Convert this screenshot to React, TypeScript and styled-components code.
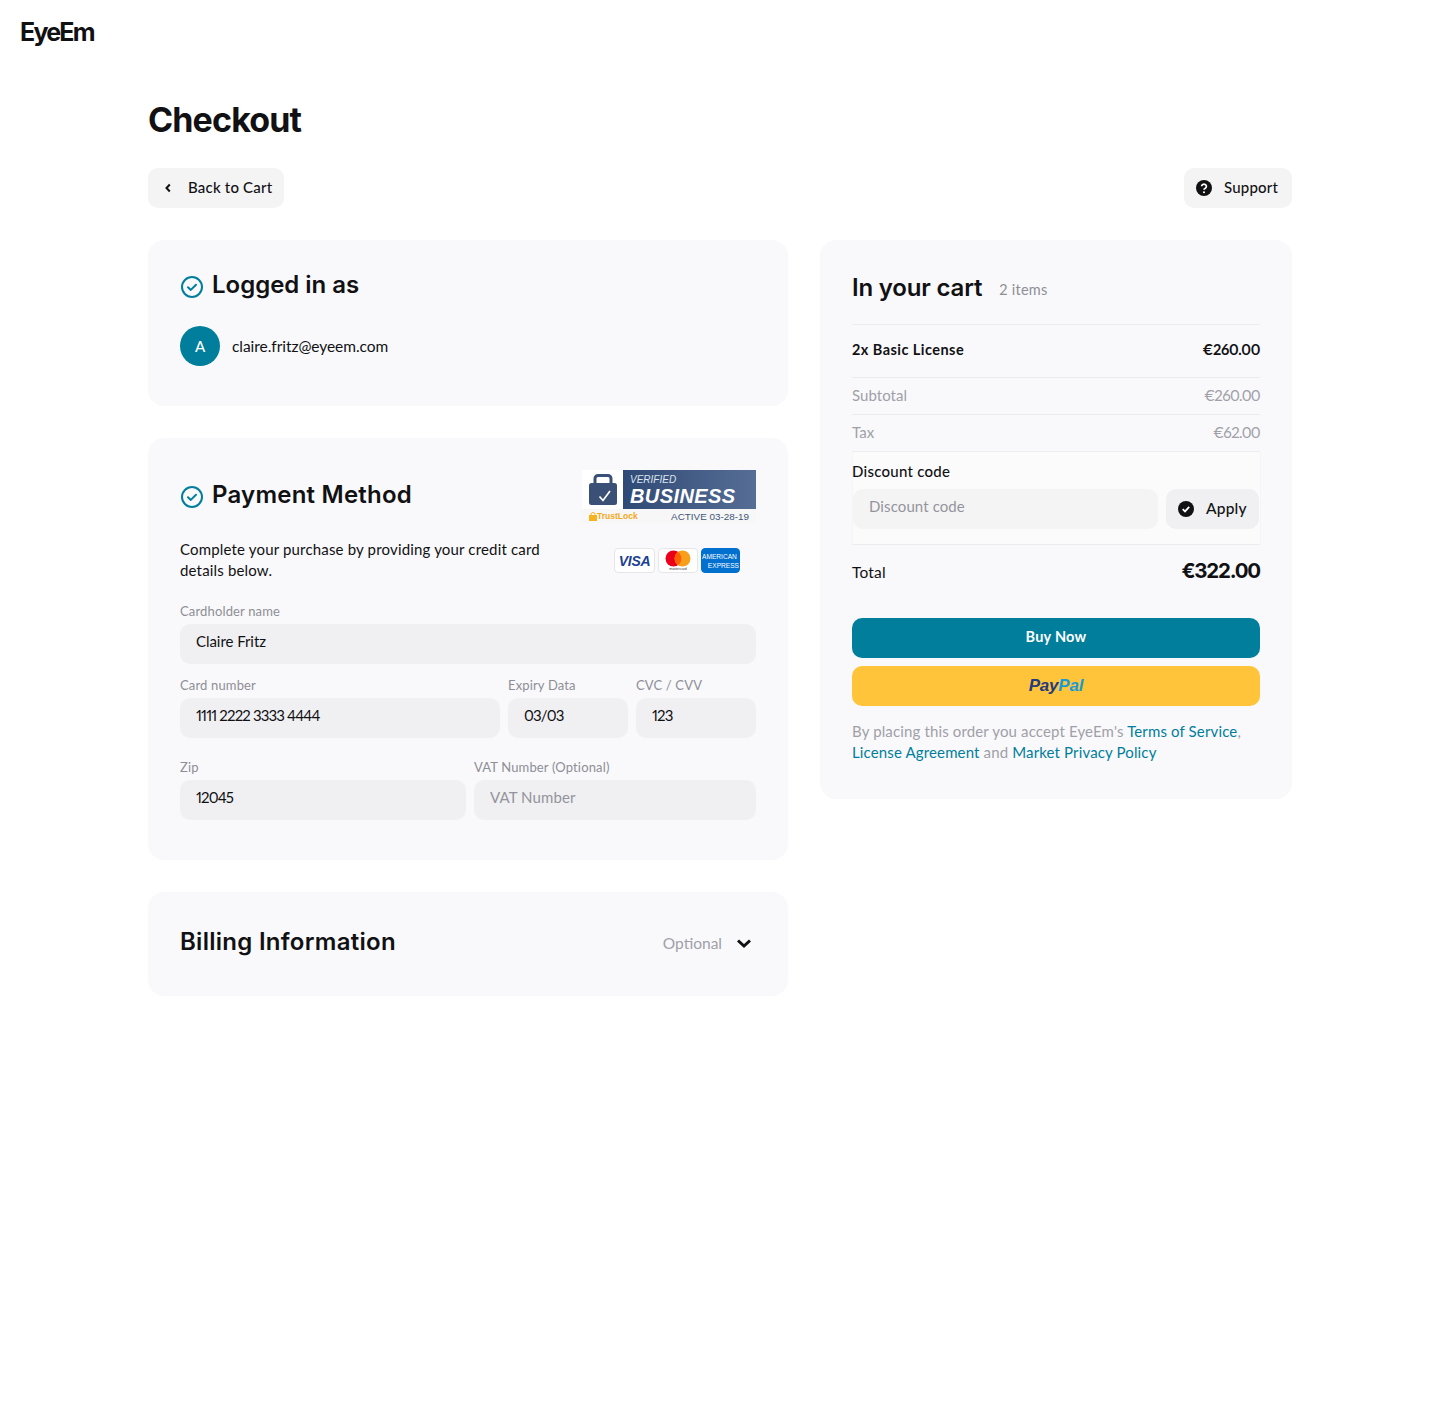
import React from "react";
import styled, { createGlobalStyle } from "styled-components";

const Global = createGlobalStyle`
  html, body { margin: 0; padding: 0; background: #fff; }
  body {
    font-family: Lato, "Open Sans", sans-serif;
    color: #111114;
    font-variant-numeric: proportional-nums;
  }
  * { box-sizing: border-box; }
`;

const Page = styled.div`
  width: 1440px;
  height: 1404px;
  padding-top: 18px;
`;
const Logo = styled.div`
  margin-left: 20px;
  height: 28px;
  font: 700 25px/28px Inter, sans-serif;
  letter-spacing: -1.8px;
  color: #111114;
`;
const Main = styled.main`
  width: 1144px;
  margin: 0 auto;
  padding-top: 52px;
`;
const Title = styled.h1`
  margin: 0;
  height: 44px;
  font: 700 34px/44px Inter, sans-serif;
  letter-spacing: -0.85px;
`;
const TopBar = styled.div`
  display: flex;
  justify-content: space-between;
  margin-top: 26px;
`;
const GhostButton = styled.button<{ $w: number }>`
  display: flex;
  align-items: center;
  gap: 12px;
  width: ${(p) => p.$w}px;
  height: 40px;
  padding: 0 0 0 12px;
  border: 0;
  border-radius: 10px;
  background: #f4f4f5;
  color: #111114;
  font: 500 15px/20px Lato, sans-serif;
  letter-spacing: 0.2px;
`;
const ButtonLabel = styled.span`
  margin-top: -2px;
`;
const Columns = styled.div`
  display: grid;
  grid-template-columns: 640px 472px;
  gap: 32px;
  align-items: start;
  margin-top: 32px;
`;
const Stack = styled.div`
  display: flex;
  flex-direction: column;
  gap: 32px;
`;
const Card = styled.section<{ $h: number }>`
  height: ${(p) => p.$h}px;
  padding: 32px;
  border-radius: 16px;
  background: #f9f9fb;
`;
const Heading = styled.h2<{ $ls: number }>`
  margin: 0;
  font: 600 24px/28px Inter, sans-serif;
  letter-spacing: ${(p) => p.$ls}px;
`;
const StatusIcon = styled.svg`
  flex: none;
  width: 24px;
  height: 24px;
  margin-top: 2px;
`;
const HeadingRow = styled.div<{ $h: number }>`
  display: flex;
  align-items: center;
  gap: 8px;
  height: ${(p) => p.$h}px;
  ${Heading} {
    margin-bottom: 2px;
  }
`;
const UserRow = styled.div`
  display: flex;
  align-items: center;
  gap: 12px;
  margin-top: 26px;
`;
const Avatar = styled.div`
  display: flex;
  align-items: center;
  justify-content: center;
  width: 40px;
  height: 40px;
  border-radius: 50%;
  background: #007e9b;
  color: #fff;
  font: 500 15px Lato, sans-serif;
`;
const Email = styled.span`
  font-size: 15.5px;
  letter-spacing: -0.05px;
`;
const PaymentHead = styled.div`
  display: flex;
  justify-content: space-between;
  height: 53px;
  align-items: flex-start;
`;
const TrustBadge = styled.div`
  display: grid;
  grid-template-columns: 41px 133px;
  grid-template-rows: 39px 14px;
  width: 174px;
  background: #fff;
`;
const LockCell = styled.div`
  display: flex;
  align-items: flex-start;
  justify-content: flex-start;
  padding: 4px 0 0 7px;
`;
const VerifiedPanel = styled.div`
  display: flex;
  flex-direction: column;
  padding: 5px 0 0 7px;
  background: linear-gradient(90deg, #2f4a76, #566e95);
  color: #fff;
  font-family: "Liberation Sans", sans-serif;
  font-style: italic;
`;
const Verified = styled.span`
  height: 10px;
  font-size: 10px;
  line-height: 10px;
  color: #dfe5ee;
`;
const Business = styled.span`
  font-size: 20px;
  line-height: 23px;
  font-weight: 700;
  letter-spacing: 0.4px;
`;
const BadgeStrip = styled.div`
  grid-column: 1 / 3;
  display: flex;
  align-items: center;
  justify-content: space-between;
  padding: 0 7px;
  background: #f7f7f7;
  font: 9.9px/13px "Liberation Sans", sans-serif;
`;
const TrustLock = styled.span`
  display: flex;
  align-items: center;
  color: #f5a81c;
  font-weight: 700;
  font-size: 8.5px;
`;
const Active = styled.span`
  color: #3f5679;
`;
const DescRow = styled.div`
  display: flex;
  justify-content: space-between;
  margin-top: 16px;
  height: 42px;
`;
const Desc = styled.p`
  margin: 0;
  width: 380px;
  font-size: 15px;
  line-height: 21px;
  letter-spacing: 0.17px;
`;
const CardLogos = styled.div`
  display: flex;
  gap: 3px;
  margin: 9px 16px 0 0;
`;
const CardLogo = styled.div<{ $blue?: boolean; $w: number }>`
  display: flex;
  align-items: center;
  justify-content: center;
  width: ${(p) => p.$w}px;
  height: 25px;
  overflow: hidden;
  border: 1px solid ${(p) => (p.$blue ? "#0170ce" : "#e6e6e8")};
  border-radius: 4px;
  background: ${(p) => (p.$blue ? "#0170ce" : "#fff")};
`;
const VisaText = styled.span`
  color: #1a3f92;
  font: italic 700 14px "Liberation Sans", sans-serif;
  letter-spacing: -0.3px;
`;
const AmexText = styled.span`
  display: flex;
  flex-direction: column;
  width: 100%;
  color: #fff;
  font: 400 6.6px/9px "Liberation Sans", sans-serif;
  white-space: nowrap;
`;
const AmexLine = styled.span<{ $right?: boolean }>`
  text-align: ${(p) => (p.$right ? "right" : "left")};
`;
const MasterWrap = styled.div`
  display: flex;
  flex-direction: column;
  align-items: center;
`;
const MasterCaption = styled.span`
  color: #333;
  font: 3.5px/4px "Liberation Sans", sans-serif;
`;
const Form = styled.div`
  display: flex;
  flex-direction: column;
  margin-top: 22px;
`;
const FieldRow = styled.div<{ $cols: string; $mt: number }>`
  display: grid;
  grid-template-columns: ${(p) => p.$cols};
  gap: 8px;
  margin-top: ${(p) => p.$mt}px;
`;
const Field = styled.label`
  display: flex;
  flex-direction: column;
  gap: 5px;
`;
const FieldLabel = styled.span`
  height: 16px;
  color: #8e8e96;
  font-size: 13px;
  line-height: 16px;
  letter-spacing: 0.15px;
`;
const Input = styled.input<{ $bg?: string; $tight?: boolean }>`
  width: 100%;
  height: 40px;
  padding: 0 16px 7px;
  border: 0;
  outline: 0;
  border-radius: 10px;
  background: ${(p) => p.$bg ?? "#f0f0f2"};
  color: #111114;
  font: 15px Lato, sans-serif;
  font-variant-numeric: proportional-nums;
  letter-spacing: ${(p) => (p.$tight ? -0.85 : -0.05)}px;
  &::placeholder {
    color: #94949c;
    opacity: 1;
    letter-spacing: 0.1px;
  }
`;
const BillingRow = styled.div`
  display: flex;
  align-items: center;
  justify-content: space-between;
  height: 36px;
`;
const OptionalWrap = styled.div`
  display: flex;
  align-items: center;
  gap: 14px;
  margin: 2px 4px 0 0;
  color: #a0a0a8;
  font-size: 15.5px;
  letter-spacing: 0;
`;
const CartHead = styled.div`
  display: flex;
  align-items: center;
  gap: 17px;
  height: 53px;
  padding-bottom: 20px;
  border-bottom: 1px solid #ececef;
`;
const CartCount = styled.span`
  color: #8e8e96;
  font-size: 14.5px;
  letter-spacing: 0.25px;
  margin-top: 2px;
`;
const LineRow = styled.div<{ $h: number; $muted?: boolean; $strong?: boolean }>`
  display: flex;
  align-items: center;
  justify-content: space-between;
  height: ${(p) => p.$h}px;
  padding-bottom: 3px;
  border-bottom: 1px solid #ececef;
  color: ${(p) => (p.$muted ? "#a0a0a8" : "#111114")};
  font-size: ${(p) => (p.$muted ? 15 : 14.5)}px;
  font-weight: ${(p) => (p.$strong ? 700 : 400)};
  letter-spacing: ${(p) => (p.$strong ? 0.45 : 0.05)}px;
`;
const Price = styled.span<{ $ls: number }>`
  letter-spacing: ${(p) => p.$ls}px;
`;
const DiscountSection = styled.div`
  margin-right: -1px;
  border-left: 1px solid #f5f5f7;
  border-right: 1px solid #f5f5f7;
  background: #fbfbfc;
`;
const DiscountLabel = styled.div`
  padding-top: 10px;
  margin-left: -1px;
  height: 28px;
  font-size: 15px;
  font-weight: 500;
  line-height: 18px;
  letter-spacing: 0.25px;
`;
const DiscountRow = styled.div`
  display: grid;
  grid-template-columns: 305px 93px;
  gap: 8px;
  margin-top: 9px;
  padding-bottom: 15px;
`;
const ApplyButton = styled.button`
  display: flex;
  align-items: center;
  gap: 12px;
  height: 40px;
  padding: 0 0 0 12px;
  border: 0;
  border-radius: 10px;
  background: #f0f0f2;
  color: #111114;
  font: 500 15.5px Lato, sans-serif;
  letter-spacing: 0.2px;
`;
const TotalRow = styled.div`
  display: flex;
  align-items: center;
  justify-content: space-between;
  height: 55px;
  border-top: 1px solid #ececef;
  font-size: 15.5px;
  letter-spacing: 0.2px;
`;
const TotalPrice = styled.span`
  font: 700 20.5px Inter, sans-serif;
  letter-spacing: -1.2px;
  margin-top: -3px;
`;
const PrimaryButton = styled.button<{ $yellow?: boolean }>`
  display: flex;
  align-items: center;
  justify-content: center;
  width: 100%;
  height: 40px;
  margin-top: ${(p) => (p.$yellow ? 8 : 19)}px;
  padding: 0 0 ${(p) => (p.$yellow ? 0 : 4)}px;
  border: 0;
  border-radius: 10px;
  background: ${(p) => (p.$yellow ? "#ffc439" : "#007e9b")};
  color: #fff;
  font: 700 14.5px Lato, sans-serif;
  letter-spacing: 0.25px;
`;
const PayText = styled.span`
  color: #253b80;
  font: italic 700 17px "Liberation Sans", sans-serif;
  letter-spacing: -0.2px;
`;
const PalText = styled.span`
  color: #179bd7;
`;
const Terms = styled.p`
  margin: 15px 0 0;
  color: #a0a0a8;
  font-size: 15px;
  line-height: 21px;
  letter-spacing: 0.14px;
`;
const TermsLink = styled.a`
  color: #007e9b;
`;

const CheckCircle = () => (
  <StatusIcon viewBox="0 0 24 24" fill="none">
    <circle cx="12" cy="12" r="10" stroke="#007e9b" strokeWidth="2" />
    <path d="M8 12.3l2.8 2.6L16 9.8" stroke="#007e9b" strokeWidth="2" strokeLinecap="round" strokeLinejoin="round" />
  </StatusIcon>
);

const LockIcon = () => (
  <svg width="28" height="31" viewBox="0 0 28 31" fill="none">
    <path d="M6 10V4.500A3 3 0 0 1 9 1.500h10a3 3 0 0 1 3 3V10" stroke="#3a5076" strokeWidth="3" />
    <rect y="9" width="28" height="22" rx="2.500" fill="#3a5076" />
    <path d="M10.500 22.500l3.500 4 7-9.500" stroke="#fff" strokeWidth="1.700" />
  </svg>
);

const MiniLock = () => (
  <svg width="8" height="9" viewBox="0 0 8 9">
    <path d="M2 4V2.500a2 2 0 0 1 4 0V4" stroke="#f5b324" fill="none" />
    <rect y="3" width="8" height="6" fill="#f5b324" />
  </svg>
);

const Chevron = ({ dir }: { dir: "left" | "down" }) =>
  dir === "left" ? (
    <svg width="16" height="16" viewBox="0 0 16 16" fill="none">
      <path d="M9.800 4.500L6.500 8l3.300 3.500" stroke="#111114" strokeWidth="2" />
    </svg>
  ) : (
    <svg width="16" height="16" viewBox="0 0 16 16" fill="none">
      <path d="M2 5.500L8 11l6-5.500" stroke="#111114" strokeWidth="3" />
    </svg>
  );

const SolidCheck = () => (
  <svg width="16" height="16" viewBox="0 0 16 16">
    <circle cx="8" cy="8" r="8" fill="#111114" />
    <path d="M4.700 8.200l2.300 2.200 4.200-4.500" fill="none" stroke="#fff" strokeWidth="1.800" />
  </svg>
);

const SolidHelp = () => (
  <svg width="16" height="16" viewBox="0 0 16 16">
    <circle cx="8" cy="8" r="8" fill="#111114" />
    <path d="M5.600 6.300a2.400 2.200 0 1 1 3.700 1.900c-.9.500-1.300.9-1.300 1.600" fill="none" stroke="#fff" strokeWidth="1.700" />
    <circle cx="8" cy="12.200" r="1.050" fill="#fff" />
  </svg>
);

const MasterMark = () => (
  <svg width="26" height="17" viewBox="0 0 26 17">
    <circle cx="8.500" cy="8.500" r="8" fill="#eb001b" />
    <circle cx="17.500" cy="8.500" r="8" fill="#f79e1b" />
    <path d="M13 2a8 8 0 0 1 0 13 8 8 0 0 1 0-13z" fill="#ff5f00" />
  </svg>
);

export default function App() {
  return (
    <Page>
      <Global />
      <Logo>EyeEm</Logo>
      <Main>
        <Title>Checkout</Title>
        <TopBar>
          <GhostButton $w={136}>
            <Chevron dir="left" />
            <ButtonLabel>Back to Cart</ButtonLabel>
          </GhostButton>
          <GhostButton $w={108}>
            <SolidHelp />
            <ButtonLabel>Support</ButtonLabel>
          </GhostButton>
        </TopBar>
        <Columns>
          <Stack>
            <Card $h={166}>
              <HeadingRow $h={28}>
                <CheckCircle />
                <Heading $ls={-0.02}>Logged in as</Heading>
              </HeadingRow>
              <UserRow>
                <Avatar>A</Avatar>
                <Email>claire.fritz@eyeem.com</Email>
              </UserRow>
            </Card>
            <Card $h={422}>
              <PaymentHead>
                <HeadingRow $h={52}>
                  <CheckCircle />
                  <Heading $ls={0.22}>Payment Method</Heading>
                </HeadingRow>
                <TrustBadge>
                  <LockCell>
                    <LockIcon />
                  </LockCell>
                  <VerifiedPanel>
                    <Verified>VERIFIED</Verified>
                    <Business>BUSINESS</Business>
                  </VerifiedPanel>
                  <BadgeStrip>
                    <TrustLock>
                      <MiniLock />
                      TrustLock
                    </TrustLock>
                    <Active>ACTIVE 03-28-19</Active>
                  </BadgeStrip>
                </TrustBadge>
              </PaymentHead>
              <DescRow>
                <Desc>Complete your purchase by providing your credit card details below.</Desc>
                <CardLogos>
                  <CardLogo $w={41}>
                    <VisaText>VISA</VisaText>
                  </CardLogo>
                  <CardLogo $w={40}>
                    <MasterWrap>
                      <MasterMark />
                      <MasterCaption>mastercard</MasterCaption>
                    </MasterWrap>
                  </CardLogo>
                  <CardLogo $w={39} $blue>
                    <AmexText>
                      <AmexLine>AMERICAN</AmexLine>
                      <AmexLine $right>EXPRESS</AmexLine>
                    </AmexText>
                  </CardLogo>
                </CardLogos>
              </DescRow>
              <Form>
                <FieldRow $cols="1fr" $mt={0}>
                  <Field>
                    <FieldLabel>Cardholder name</FieldLabel>
                    <Input readOnly value="Claire Fritz" />
                  </Field>
                </FieldRow>
                <FieldRow $cols="320px 120px 120px" $mt={13}>
                  <Field>
                    <FieldLabel>Card number</FieldLabel>
                    <Input $tight readOnly value="1111 2222 3333 4444" />
                  </Field>
                  <Field>
                    <FieldLabel>Expiry Data</FieldLabel>
                    <Input $tight readOnly value="03/03" />
                  </Field>
                  <Field>
                    <FieldLabel>CVC / CVV</FieldLabel>
                    <Input $tight readOnly value="123" />
                  </Field>
                </FieldRow>
                <FieldRow $cols="286px 282px" $mt={21}>
                  <Field>
                    <FieldLabel>Zip</FieldLabel>
                    <Input $tight readOnly value="12045" />
                  </Field>
                  <Field>
                    <FieldLabel>VAT Number (Optional)</FieldLabel>
                    <Input readOnly placeholder="VAT Number" />
                  </Field>
                </FieldRow>
              </Form>
            </Card>
            <Card $h={104}>
              <BillingRow>
                <Heading $ls={0.28}>Billing Information</Heading>
                <OptionalWrap>
                  Optional
                  <Chevron dir="down" />
                </OptionalWrap>
              </BillingRow>
            </Card>
          </Stack>
          <Card $h={559}>
            <CartHead>
              <Heading $ls={-0.17}>In your cart</Heading>
              <CartCount>2 items</CartCount>
            </CartHead>
            <LineRow $h={53} $strong>
              <span>2x Basic License</span>
              <Price $ls={-0.3}>€260.00</Price>
            </LineRow>
            <LineRow $h={37} $muted>
              <span>Subtotal</span>
              <Price $ls={-0.7}>€260.00</Price>
            </LineRow>
            <LineRow $h={37} $muted>
              <span>Tax</span>
              <Price $ls={-0.7}>€62.00</Price>
            </LineRow>
            <DiscountSection>
              <DiscountLabel>Discount code</DiscountLabel>
              <DiscountRow>
                <Input $bg="#f4f4f5" placeholder="Discount code" readOnly />
                <ApplyButton>
                  <SolidCheck />
                  <ButtonLabel>Apply</ButtonLabel>
                </ApplyButton>
              </DiscountRow>
            </DiscountSection>
            <TotalRow>
              <span>Total</span>
              <TotalPrice>€322.00</TotalPrice>
            </TotalRow>
            <PrimaryButton>Buy Now</PrimaryButton>
            <PrimaryButton $yellow>
              <PayText>
                Pay<PalText>Pal</PalText>
              </PayText>
            </PrimaryButton>
            <Terms>
              By placing this order you accept EyeEm's <TermsLink>Terms of Service</TermsLink>,{" "}
              <TermsLink>License Agreement</TermsLink> and <TermsLink>Market Privacy Policy</TermsLink>
            </Terms>
          </Card>
        </Columns>
      </Main>
    </Page>
  );
}
